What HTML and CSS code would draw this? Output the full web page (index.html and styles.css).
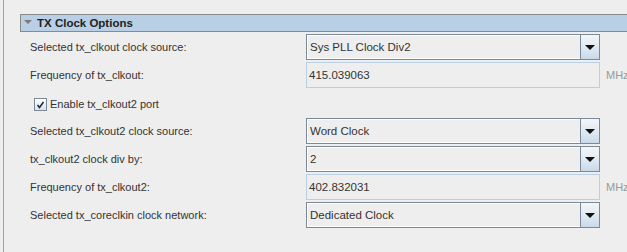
FILE: index.html
```html
<!DOCTYPE html>
<html lang="en">
	<head>
		<meta charset="UTF-8" />
		<meta name="viewport" content="width=device-width, initial-scale=1.0" />
		<link rel="stylesheet" href="styles.css">
		<title>TX Clock Options</title>
	</head>
	<body>
		<div id="frame">
			<div class="section-title">
				<span class="toggle"></span>
				TX Clock Options
			</div>

			<div class="form">
				<label class="label">Selected tx_clkout clock source:</label>
				<div class="combo">
					<div class="combo-value">Sys PLL Clock Div2</div>
					<div class="combo-arrow"><span></span></div>
				</div>
				<div class="unit"></div>

				<label class="label">Frequency of tx_clkout:</label>
				<div class="field">415.039063</div>
				<div class="unit">MHz</div>

				<div class="check-row">
					<span class="checkbox">
						<svg width="9" height="9" viewBox="0 0 9 9">
							<path d="M1.5 5 L3.5 7.5 L7.5 2" fill="none" stroke="#222" stroke-width="1.5" />
						</svg>
					</span>
					Enable tx_clkout2 port
				</div>

				<label class="label">Selected tx_clkout2 clock source:</label>
				<div class="combo">
					<div class="combo-value">Word Clock</div>
					<div class="combo-arrow"><span></span></div>
				</div>
				<div class="unit"></div>

				<label class="label">tx_clkout2 clock div by:</label>
				<div class="combo">
					<div class="combo-value">2</div>
					<div class="combo-arrow"><span></span></div>
				</div>
				<div class="unit"></div>

				<label class="label">Frequency of tx_clkout2:</label>
				<div class="field">402.832031</div>
				<div class="unit">MHz</div>

				<label class="label">Selected tx_coreclkin clock network:</label>
				<div class="combo">
					<div class="combo-value">Dedicated Clock</div>
					<div class="combo-arrow"><span></span></div>
				</div>
				<div class="unit"></div>
			</div>
		</div>
	</body>
</html>
```

FILE: styles.css
```css
body {
	margin: 0;
	height: 252px;
	overflow: hidden;
	background-color: #eeeeee;
	font-family: "Liberation Sans", Arial, sans-serif;
	font-size: 11px;
	color: #333333;
}

#frame {
	margin-left: 3px;
	height: 252px;
	border-left: 1px solid #8fa3c3;
	padding-left: 16px;
	padding-top: 14px;
	box-sizing: border-box;
}

.section-title {
	height: 16px;
	display: flex;
	align-items: center;
	gap: 5px;
	padding-left: 3px;
	background-color: #b8cfe5;
	border: 1px solid #8a8a8a;
	border-right: none;
	font-weight: bold;
	font-size: 11.5px;
	color: #222222;

	.toggle {
		width: 0;
		height: 0;
		border-left: 4px solid transparent;
		border-right: 4px solid transparent;
		border-top: 4px solid #7a7a7a;
		margin-top: -2px;
	}
}

.form {
	display: grid;
	grid-template-columns: 270px 294px auto;
	grid-auto-rows: 26px;
	row-gap: 2px;
	column-gap: 6px;
	padding-left: 10px;
	padding-top: 2px;
	align-items: center;
}

.label {
	white-space: nowrap;
}

.combo {
	height: 26px;
	box-sizing: border-box;
	display: flex;
	border: 1px solid #7a8a99;
	background-color: #eeeeee;

	.combo-value {
		flex: 1;
		display: flex;
		align-items: center;
		padding-left: 2px;
		border: 1px solid #ffffff;
		border-right: none;
		font-size: 11.5px;
	}

	.combo-arrow {
		width: 18px;
		display: flex;
		align-items: center;
		justify-content: center;
		border-left: 1px solid #7a8a99;
		background: linear-gradient(#f4f6f9, #dde7f1 60%, #c9d9ea);

		span {
			width: 0;
			height: 0;
			border-left: 5px solid transparent;
			border-right: 5px solid transparent;
			border-top: 5px solid #111111;
		}
	}
}

.field {
	height: 26px;
	box-sizing: border-box;
	display: flex;
	align-items: center;
	padding-left: 2px;
	border: 1px solid #b8cfe5;
	background-color: #eeeeee;
	font-size: 11.5px;
}

.unit {
	color: #999999;
	white-space: nowrap;
}

.check-row {
	grid-column: 1 / span 3;
	display: flex;
	align-items: center;
	gap: 3px;
	padding-left: 4px;
	height: 28px;
	margin-bottom: -2px;

	.checkbox {
		width: 11px;
		height: 11px;
		display: flex;
		align-items: center;
		justify-content: center;
		border: 1px solid #7a8a99;
		background: linear-gradient(#ffffff, #d6e2ee);
	}
}
```
